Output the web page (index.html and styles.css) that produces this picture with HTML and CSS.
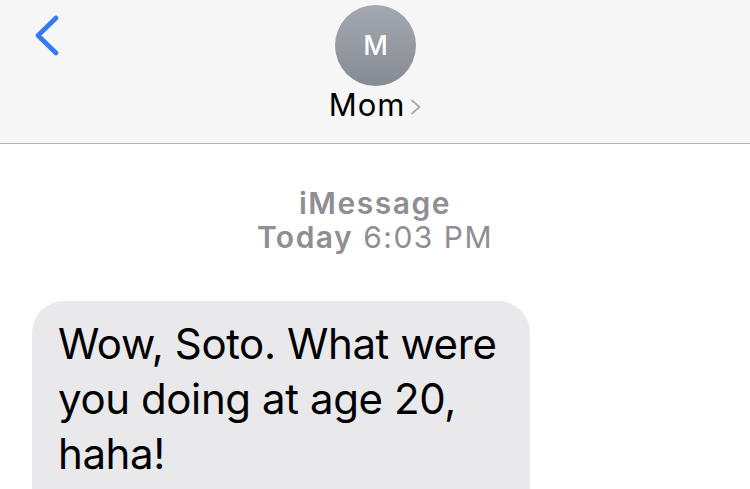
FILE: index.html
```html
<!DOCTYPE html>
<html>
<head>
<meta charset="utf-8">
<link rel="stylesheet" href="styles.css">
</head>
<body>
<div class="screen">
  <header class="nav">
    <div class="back">
      <svg width="26" height="42" viewBox="0 0 26 42"><path d="M23 3 L5 20.5 L23 38" fill="none" stroke="#3478f6" stroke-width="4.6" stroke-linecap="round" stroke-linejoin="round"/></svg>
    </div>
    <div class="contact">
      <div class="avatar">M</div>
      <div class="name">Mom<span class="chev">
        <svg width="12" height="16" viewBox="0 0 12 16"><path d="M2 1.5 L9.5 8 L2 14.5" fill="none" stroke="#a9a9ae" stroke-width="1.7" stroke-linecap="round" stroke-linejoin="round"/></svg>
      </span></div>
    </div>
  </header>
  <main class="thread">
    <div class="meta">
      <div class="service">iMessage</div>
      <div class="time"><b>Today</b> 6:03 PM</div>
    </div>
    <div class="bubble">Wow, Soto. What were you doing at age 20, haha!</div>
  </main>
</div>
</body>
</html>
```
FILE: styles.css
```css
html, body {
  margin: 0;
  padding: 0;
  background: #ffffff;
  overflow: hidden;
}
.screen {
  width: 750px;
  height: 489px;
  font-family: Inter, "Liberation Sans", sans-serif;
  display: flex;
  flex-direction: column;
  overflow: hidden;
}
.nav {
  position: relative;
  height: 143px;
  flex: none;
  background: #f6f6f6;
  border-bottom: 1px solid #b2b2b2;
  display: flex;
  justify-content: center;
}
.back {
  position: absolute;
  left: 33px;
  top: 15px;
}
.back svg { display: block; }
.contact {
  display: flex;
  flex-direction: column;
  align-items: center;
  padding-top: 5px;
  margin-left: 1px;
}
.avatar {
  width: 81px;
  height: 81px;
  border-radius: 50%;
  background: linear-gradient(#a4a8b1, #868a93);
  color: #fff;
  font-size: 27px;
  font-weight: 500;
  display: flex;
  align-items: center;
  justify-content: center;
}
.name {
  font-size: 31px;
  letter-spacing: 1px;
  color: #000;
  display: flex;
  align-items: center;
  line-height: 38px;
}
.chev {
  display: flex;
  margin-left: 5px;
  margin-top: 3px;
}
.thread {
  flex: 1;
  display: flex;
  flex-direction: column;
}
.meta {
  margin-top: 42px;
  text-align: center;
  color: #8e8e93;
  font-size: 30px;
  line-height: 34px;
  letter-spacing: 1.5px;
}
.service { font-weight: 600; }
.time b { font-weight: 600; }
.bubble {
  margin: 47px 0 0 32px;
  width: 445px;
  background: #e9e9eb;
  border-radius: 32px;
  padding: 15px 27px 40px 26px;
  font-size: 42px;
  line-height: 55px;
  letter-spacing: -0.4px;
  color: #000;
}
```
